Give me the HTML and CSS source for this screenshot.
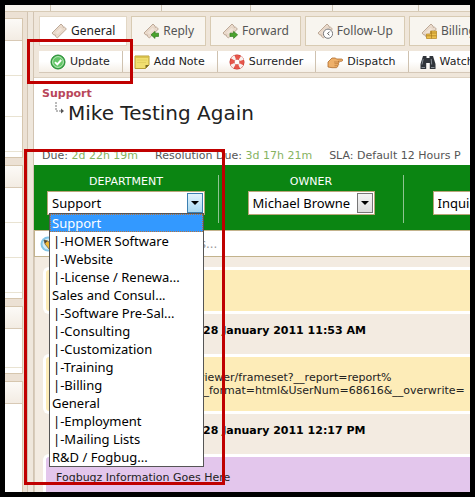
FILE: index.html
```html
<!DOCTYPE html>
<html lang="en">
<head>
<meta charset="utf-8">
<title>Mike Testing Again</title>
<link rel="stylesheet" href="styles.css">
</head>
<body>
<svg class="defs" aria-hidden="true">
  <symbol id="ticket" viewBox="0 0 16 16">
    <path d="M1 10 L10 1 L12 3 L12.3 4.4 L13.5 4.2 L15.4 6 L6.3 15 L4.5 13.2 L4.2 11.9 L2.8 12 Z" fill="#eadacb" stroke="#b7a18e" stroke-width=".9"/>
    <path d="M4 9.5 L9.5 4 L12 6.5 L6.5 12 Z" fill="#f0e3d7" stroke="#dccbbb" stroke-width=".5"/>
  </symbol>
</svg>
<div class="screen">
  <div class="strip"><i></i><i></i><i></i><i></i><i></i><i></i></div>
  <div class="app">
    <aside class="side">
      <section class="panel"><header></header><div></div><div></div><div></div></section>
      <section class="panel"><header></header><div></div><div></div><div></div></section>
      <section class="panel short"><header></header><div></div></section>
      <section class="panel last"><header></header><div></div></section>
    </aside>
    <div class="splitter"></div>
    <main class="main">
      <div class="head">
        <nav class="tabs">
          <a class="tab active" href="#general"><svg class="icon" viewBox="0 0 16 16"><use href="#ticket"/></svg>General</a>
          <a class="tab" href="#reply"><svg class="icon" viewBox="0 0 16 16"><use href="#ticket"/><path d="M8 11.8 L12 8.4 V10.2 H15.6 V13.4 H12 V15.4 Z" fill="#4aa52e" stroke="#2f7a1c" stroke-width=".7"/></svg>Reply</a>
          <a class="tab" href="#forward"><svg class="icon" viewBox="0 0 16 16"><use href="#ticket"/><path d="M15.6 11.8 L11.6 8.4 V10.2 H8 V13.4 H11.6 V15.4 Z" fill="#4aa52e" stroke="#2f7a1c" stroke-width=".7"/></svg>Forward</a>
          <a class="tab" href="#follow"><svg class="icon" viewBox="0 0 16 16"><use href="#ticket"/><circle cx="11" cy="10.7" r="4.6" fill="#fff" stroke="#77797d"/><path d="M12.6 8.6 L10.6 10.6 L12.4 12.2" fill="none" stroke="#444" stroke-width=".9"/></svg>Follow-Up</a>
          <a class="tab" href="#billing"><svg class="icon" viewBox="0 0 16 16"><use href="#ticket"/><path d="M9.5 8h6v7.500h-10v-4.500h4z" fill="#ecc04c" stroke="#b58521" stroke-width=".7"/><path d="M9.500 10h6M5.500 12.800h10M10.500 8v7.500" stroke="#a97a1b" stroke-width=".7"/></svg>Billing</a>
        </nav>
        <div class="toolbar">
          <button type="button"><svg class="icon" viewBox="0 0 16 16"><circle cx="8" cy="8" r="7" fill="#3fae49" stroke="#258a33"/><circle cx="8" cy="8" r="5.400" fill="#63c567" stroke="#c9edc9" stroke-width=".9"/><path d="M5 8.100 L7.300 10.400 L11.200 6" fill="none" stroke="#fff" stroke-width="1.900"/></svg>Update</button>
          <button type="button"><svg class="icon" viewBox="0 0 16 16"><path d="M1 2 H15 V11 L11.500 14.500 H1 Z" fill="#f1df70" stroke="#b99f35"/><path d="M1.500 3h13" stroke="#d0b944" stroke-width="1.500"/><path d="M15 11 H11.500 V14.500 Z" fill="#7b6a22"/><path d="M3 6h10M3 8.500h9" stroke="#e0cb5c" stroke-width=".8"/></svg>Add Note</button>
          <button type="button"><svg class="icon" viewBox="0 0 16 16"><circle cx="8" cy="8" r="5" fill="none" stroke="#c0332b" stroke-width="5"/><circle cx="8" cy="8" r="5" fill="none" stroke="#e6564b" stroke-width="4"/><circle cx="8" cy="8" r="5" fill="none" stroke="#f8f1ee" stroke-width="4.400" stroke-dasharray="3 4.850" stroke-dashoffset="-2.400"/></svg>Surrender</button>
          <button type="button"><svg class="icon" viewBox="0 0 16 16"><path d="M1 8 L5 4 H8.500 L9.500 5 H14.500 C16 5 16 7.200 14.500 7.300 H11 C12.500 7.800 12.300 9.200 11.300 9.500 C12 10.300 11.600 11.500 10.600 11.700 C11 12.700 10 13.700 9 13.700 H5 L1 13 Z" fill="#eeb06a" stroke="#ad6b2c" stroke-width=".8"/><path d="M7 8h4.500M7.500 9.700h4M7.500 11.700h3" stroke="#b87534" stroke-width=".7"/></svg>Dispatch</button>
          <button type="button"><svg class="icon" viewBox="0 0 16 16"><path d="M3 2 H6.500 V4 H9.500 V2 H13 L15.500 10 V15 H9.800 V9 H6.200 V15 H.5 V10 Z" fill="#30343a"/><path d="M3.200 5 L2 10.500 M11.200 5 L11.700 10.500 M1.500 13.500H5M11 13.500h3.500" stroke="#858b93"/></svg>Watch</button>
        </div>
      </div>
      <section class="subject">
        <p class="queue">Support</p>
        <h1><svg class="branch" viewBox="0 0 12 14" aria-hidden="true"><path d="M2 0V9H7" fill="none" stroke="#777" stroke-width="1" stroke-dasharray="2 1"/><path d="M7 6.500 L10 9 L7 11.500Z" fill="#555"/></svg>Mike Testing Again</h1>
        <p class="meta"><span>Due: <b>2d 22h 19m</b></span><span>Resolution Due: <b>3d 17h 21m</b></span><span>SLA: Default 12 Hours P</span></p>
      </section>
      <section class="fields">
        <div class="field">
          <label for="department">DEPARTMENT</label>
          <div class="combo">
            <select id="department" class="wide open"><option>Support</option></select>
            <ul class="menu" role="listbox" aria-label="Department">
              <li role="option" aria-selected="true">Support</li>
              <li role="option" class="child">|-HOMER Software</li>
              <li role="option" class="child">|-Website</li>
              <li role="option" class="child">|-License / Renewa...</li>
              <li role="option">Sales and Consul...</li>
              <li role="option" class="child">|-Software Pre-Sal...</li>
              <li role="option" class="child">|-Consulting</li>
              <li role="option" class="child">|-Customization</li>
              <li role="option" class="child">|-Training</li>
              <li role="option" class="child">|-Billing</li>
              <li role="option">General</li>
              <li role="option" class="child">|-Employment</li>
              <li role="option" class="child">|-Mailing Lists</li>
              <li role="option">R&amp;D / Fogbug...</li>
            </ul>
          </div>
        </div>
        <div class="field">
          <label for="owner">OWNER</label>
          <select id="owner"><option>Michael Browne</option></select>
        </div>
        <div class="field">
          <label for="type">TYPE</label>
          <select id="type"><option>Inquiry</option></select>
        </div>
      </section>
      <div class="tags">
        <svg class="icon" viewBox="0 0 16 16" aria-hidden="true"><circle cx="8" cy="8" r="7.500" fill="#82c6e8"/><circle cx="8" cy="8" r="5.500" fill="#d3ecf7"/><path d="M4 4 L8 5 L12 10 L9 13 L5 8Z" fill="#f0b93a" stroke="#6b5b3a" stroke-width=".7"/><path d="M4 4 L5 7.500 L7.500 5Z" fill="#444"/></svg>
        <input type="text" aria-label="Tags" placeholder="tags...">
      </div>
      <section class="posts">
        <article class="post note"></article>
        <h2>28 January 2011 11:53 AM</h2>
        <article class="post note tall"><p class="link">viewer/frameset?__report=report%<br>__format=html&amp;UserNum=68616&amp;__overwrite=</p></article>
        <h2>28 January 2011 12:17 PM</h2>
        <article class="post info"><p>Fogbugz Information Goes Here</p></article>
      </section>
    </main>
  </div>
</div>
<div class="mark mark-update"></div>
<div class="mark mark-department"></div>
</body>
</html>
```
FILE: styles.css
```css
* { box-sizing: border-box; }
body {
  margin: 0;
  background: #000;
  color: #222;
  font: 11px/13px "DejaVu Sans", Verdana, sans-serif;
}
p, h1, h2, ul { margin: 0; padding: 0; }
.defs { position: absolute; width: 0; height: 0; }
.icon { flex: none; width: 16px; height: 16px; }

.screen {
  display: flex;
  flex-direction: column;
  height: 100vh;
  overflow: hidden;
  border: 5px solid #000;
  background: #ece1d4;
}
.strip {
  display: grid;
  flex: none;
  grid-template-columns: 46px 111px 89px 82px 86px 1fr;
  height: 7px;
  border-bottom: 1px solid #d8cbb6;
  background: #f7f3ec;
}
.strip i { border-right: 1px solid #d0c5b3; }
.strip i:last-child { border: 0; }
.app {
  display: grid;
  flex: 1;
  grid-template-columns: 18px 11px minmax(0, 1fr);
  min-height: 0;
}

.side {
  display: flex;
  flex-direction: column;
  gap: 7px;
  padding-top: 6px;
}
.panel {
  flex: none;
  border: 1px solid #d6c6ae;
  border-left: 0;
  background: #fff;
}
.panel header {
  height: 22px;
  border-bottom: 1px solid #d8c9b5;
  background: linear-gradient(#fcfaf7, #f3ece3);
}
.panel div { height: 35px; border-bottom: 1px solid #e9e3d2; }
.panel div:last-child { margin-bottom: 5px; }
.panel:first-child div:nth-child(3) { height: 41px; }
.short div { height: 39px; }
.last { flex: 1; border-bottom: 0; }
.last div { border: 0; }
.splitter {
  margin: 0 0 0 4px;
  border: solid #d2c4b2;
  border-width: 0 1px;
  background: #efe7dc;
}
.main {
  display: flex;
  flex-direction: column;
  min-width: 0;
  overflow: hidden;
  background: #fff;
}

.head {
  flex: none;
  padding: 4px 0 4px 5px;
  border-bottom: 1px solid #ddd2c2;
  background: #efe6da;
}
.tabs { display: flex; gap: 4px; }
.tab {
  display: flex;
  flex: none;
  align-items: center;
  gap: 4px;
  height: 30px;
  padding: 0 11px;
  border: 1px solid #d8cbb3;
  background: #f8f5ef;
  color: #555;
  font: 12px/18px "Noto Sans", "Trebuchet MS", sans-serif;
  text-decoration: none;
}
.tab.active { border-color: #e2d7c5; background: #fff; color: #222; }
.toolbar {
  display: flex;
  height: 22px;
  margin-top: 5px;
  border-bottom: 1px solid #d5c8b8;
  background: linear-gradient(#fff 50%, #f5efe7);
}
.toolbar button {
  display: flex;
  flex: none;
  align-items: center;
  gap: 4px;
  padding: 0 12px 0 11px;
  border: 0;
  border-right: 1px solid #cfc2b0;
  background: none;
  color: #222;
  font: inherit;
}

.subject {
  flex: none;
  padding: 9px 0 3px 8px;
  white-space: nowrap;
}
.queue { color: #b8465a; font-weight: bold; }
h1 {
  display: flex;
  align-items: center;
  gap: 2px;
  padding: 0 0 1px 12px;
  font-size: 20px;
  font-weight: normal;
  line-height: 26px;
}
.branch { width: 12px; height: 14px; margin-bottom: 8px; }
.meta {
  display: flex;
  gap: 17px;
  padding-top: 22px;
  color: #555;
}
.meta b { color: #86b35f; font-weight: normal; }

.fields {
  display: flex;
  flex: none;
  height: 65px;
  padding: 10px 0 7px;
  background: #0b8512;
}
.field {
  display: flex;
  flex: 0 0 185px;
  flex-direction: column;
  align-items: center;
  gap: 3px;
  border-right: 1px solid #8fc492;
}
.field label { color: #fff; }
select {
  width: 127px;
  height: 24px;
  padding: 0 4px;
  appearance: none;
  border: 1px solid #b9a579;
  border-radius: 0;
  background:
    url("data:image/svg+xml,%3Csvg xmlns='http://www.w3.org/2000/svg' width='8' height='4'%3E%3Cpath d='M0 0H8L4 4Z'/%3E%3C/svg%3E") right 5px center no-repeat,
    linear-gradient(#f4f4f4, #ddd) right 2px center / 14px 18px no-repeat,
    linear-gradient(#777, #777) right 1px center / 16px 20px no-repeat,
    #fff;
  color: #000;
  font: 13px/20px "Noto Sans", Calibri, sans-serif;
}
.open {
  background:
    url("data:image/svg+xml,%3Csvg xmlns='http://www.w3.org/2000/svg' width='8' height='4'%3E%3Cpath d='M0 0H8L4 4Z'/%3E%3C/svg%3E") right 5px center no-repeat,
    linear-gradient(#e3f3fc, #a9d8f2) right 2px center / 14px 18px no-repeat,
    linear-gradient(#3c7fb1, #3c7fb1) right 1px center / 16px 20px no-repeat,
    #fff;
}
.combo { position: relative; }
.wide { width: 158px; }
.menu {
  position: absolute;
  z-index: 2;
  top: 22px;
  left: 2px;
  width: 155px;
  border: 1px solid #555;
  background: #fff;
  color: #000;
  font: 13px/18px "Noto Sans", Calibri, sans-serif;
  list-style: none;
  white-space: nowrap;
}
.menu li { height: 18px; padding: 0 2px; }
.menu .child { padding-left: 3px; }
.menu li[aria-selected] { background: #3399ff; color: #fff; outline: 1px dotted #b9733b; outline-offset: -1px; }

.tags {
  display: flex;
  flex: none;
  align-items: center;
  height: 27px;
  padding-left: 5px;
  border: 1px solid #c3b38d;
  border-right: 0;
}
.tags input {
  flex: 1;
  min-width: 0;
  padding: 0 0 0 124px;
  border: 0;
  background: none;
  font: 12px/16px "DejaVu Sans", sans-serif;
}
.tags input::placeholder { color: #999; opacity: 1; }

.posts {
  flex: 1;
  min-height: 0;
  padding: 10px 0 0 8px;
  border-left: 1px solid #d8ccbb;
  background: #f3ebe1;
}
.post {
  min-height: 47px;
  padding: 14px 10px;
  border: 3px solid #fff;
  border-right: 0;
  border-radius: 6px 0 0 6px;
  white-space: nowrap;
}
.note { background: #fdecb8; }
.tall { min-height: 60px; }
.info { background: #e3c6ec; }
.link { padding-left: 142px; }
h2 {
  height: 40px;
  padding: 10px 0 0 160px;
  color: #000;
  font-size: 11px;
  line-height: 13px;
}

.mark {
  position: absolute;
  z-index: 3;
  border: 3px solid #c00000;
  pointer-events: none;
}
.mark-update { top: 39px; left: 27px; width: 106px; height: 45px; }
.mark-department { top: 149px; left: 24px; width: 201px; height: 336px; }
```
